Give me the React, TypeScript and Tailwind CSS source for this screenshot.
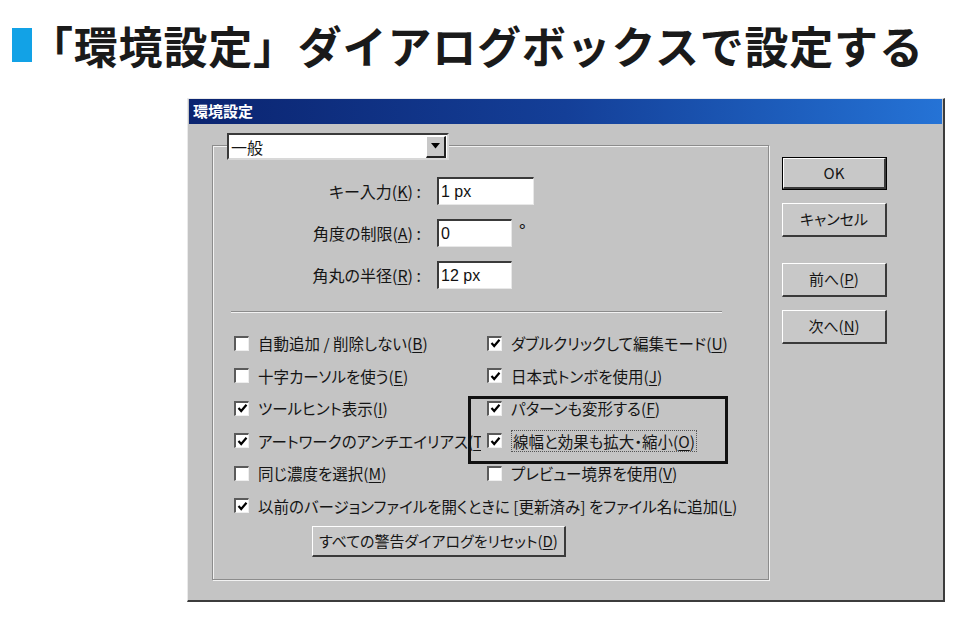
import React from 'react';

const jp = "font-['Noto_Sans_CJK_JP','Noto_Sans',sans-serif]";

function U({ children }: { children: React.ReactNode }) {
  return <span className="underline underline-offset-2">{children}</span>;
}

function CheckBox({ checked }: { checked: boolean }) {
  return (
    <span className="w-[15px] h-[15px] shrink-0 bg-white border-t-2 border-l-2 border-t-[#5a5a5a] border-l-[#5a5a5a] border-b border-r border-b-[#eeeeee] border-r-[#eeeeee] flex items-center justify-center">
      {checked && (
        <svg width="11" height="11" viewBox="0 0 11 11">
          <path d="M1.5 5 L4.2 8 L9.5 1.8" fill="none" stroke="#000" strokeWidth="2.2" />
        </svg>
      )}
    </span>
  );
}

function Check({ checked, children, focus }: { checked: boolean; children: React.ReactNode; focus?: boolean }) {
  return (
    <div className="h-[32.5px] flex items-center gap-[9px] whitespace-nowrap">
      <CheckBox checked={checked} />
      <span className={focus ? 'border border-dotted border-[#555] px-[1px] leading-[20px]' : 'leading-[20px]'}>
        {children}
      </span>
    </div>
  );
}

function Button({ children, className, isDefault }: { children: React.ReactNode; className: string; isDefault?: boolean }) {
  return (
    <div className={`${className} ${isDefault ? 'border border-black' : ''}`}>
      <div className="w-full h-full flex items-center justify-center bg-[#c8c8c8] border-t border-l border-t-white border-l-white border-b-2 border-r-2 border-b-[#3a3a3a] border-r-[#3a3a3a] text-[15px] text-[#151515] whitespace-nowrap">
        {children}
      </div>
    </div>
  );
}

function Field({ value, width }: { value: string; width: string }) {
  return (
    <div className={`${width} h-[28px] bg-white border-t-2 border-l-2 border-t-[#3a3a3a] border-l-[#3a3a3a] border-b border-r border-b-[#e8e8e8] border-r-[#e8e8e8] flex items-center pl-[2px] text-[16px] text-[#111] font-['Liberation_Sans',sans-serif]`}>
      {value}
    </div>
  );
}

export default function App() {
  return (
    <div className={`w-[975px] h-[629px] bg-white overflow-hidden ${jp}`}>
      {/* Heading */}
      <div className="h-[98px] flex items-center pl-[12px] pb-[8px]">
        <div className="w-[20px] h-[34px] bg-[#12a2e6]" />
        <h1 className="-ml-[3px] text-[44px] font-bold text-[#1a1a1a] leading-none tracking-[0.8px] whitespace-nowrap">
          「環境設定」ダイアログボックスで設定する
        </h1>
      </div>

      {/* Dialog window */}
      <div className="ml-[187px] w-[758px] h-[504px] flex flex-col bg-[#c4c4c4] border-t border-l border-t-[#eaeaea] border-l-[#eaeaea] border-b-2 border-r-2 border-b-[#3c3c3c] border-r-[#3c3c3c] text-[15.5px] text-[#151515] [font-feature-settings:'palt']">
        <div className="h-[25px] mx-[1px] bg-linear-to-r from-[#0b2470] via-[#143f98] to-[#2573d6] flex items-center pl-[4px] text-white text-[15px] font-bold">
          環境設定
        </div>

        <div className="flex pl-[24px] pt-[21px]">
          {/* Group box */}
          <div className="relative w-[557px] h-[435px] border border-[#8c8c8c] shadow-[inset_1px_1px_0_#f2f2f2,1px_1px_0_#f2f2f2]">
            {/* Panel selector */}
            <div className="absolute left-[14px] top-[-13px] w-[222px] h-[27px] bg-white border-t-2 border-l-2 border-t-[#3a3a3a] border-l-[#3a3a3a] border-b-2 border-r-2 border-b-[#d8d8d8] border-r-[#d8d8d8] flex items-center">
              <span className="flex-1 pl-[2px] text-[16px]">一般</span>
              <div className="w-[20px] h-[22px] mr-[1px] bg-[#c8c8c8] border-t border-l border-t-white border-l-white border-b-2 border-r-2 border-b-[#222] border-r-[#222] flex items-center justify-center">
                <svg width="9" height="6" viewBox="0 0 9 6">
                  <path d="M0 0 H9 L4.5 5.5 Z" fill="#000" />
                </svg>
              </div>
            </div>

            {/* Numeric fields */}
            <div className="grid grid-cols-[208px_auto] gap-x-[16px] gap-y-[14px] pt-[31px] items-center text-[16px]">
              <div className="text-right whitespace-nowrap">キー入力(<U>K</U>)&nbsp;:</div>
              <Field value="1 px" width="w-[97px]" />
              <div className="text-right whitespace-nowrap">角度の制限(<U>A</U>)&nbsp;:</div>
              <div className="flex items-start gap-[7px]">
                <Field value="0" width="w-[75px]" />
                <span className="text-[18px] leading-none mt-[2px]">°</span>
              </div>
              <div className="text-right whitespace-nowrap">角丸の半径(<U>R</U>)&nbsp;:</div>
              <Field value="12 px" width="w-[75px]" />
            </div>

            <div className="ml-[18px] mt-[22px] w-[491px] h-[2px] border-t border-t-[#8c8c8c] border-b border-b-[#f2f2f2]" />

            {/* Options */}
            <div className="grid grid-cols-[253px_auto] pl-[21px] mt-[14px]">
              <Check checked={false}>自動追加 / 削除しない(<U>B</U>)</Check>
              <Check checked>ダブルクリックして編集モード(<U>U</U>)</Check>
              <Check checked={false}>十字カーソルを使う(<U>E</U>)</Check>
              <Check checked>日本式トンボを使用(<U>J</U>)</Check>
              <Check checked>ツールヒント表示(<U>I</U>)</Check>
              <Check checked>パターンも変形する(<U>F</U>)</Check>
              <div className="w-[247px] overflow-hidden">
                <Check checked>アートワークのアンチエイリアス(<U>T</U>)</Check>
              </div>
              <Check checked focus>線幅と効果も拡大・縮小(<U>O</U>)</Check>
              <Check checked={false}>同じ濃度を選択(<U>M</U>)</Check>
              <Check checked={false}>プレビュー境界を使用(<U>V</U>)</Check>
              <div className="col-span-2">
                <Check checked>以前のバージョンファイルを開くときに [更新済み] をファイル名に追加(<U>L</U>)</Check>
              </div>
            </div>

            <div className="pl-[99px] mt-[4px]">
              <Button className="w-[254px] h-[31px]">すべての警告ダイアログをリセット(<U>D</U>)</Button>
            </div>

            {/* Annotation frame */}
            <div className="absolute left-[255px] top-[250px] w-[260px] h-[68px] border-[3px] border-[#111]" />
          </div>

          {/* Action buttons */}
          <div className="ml-[13px] pt-[12px] flex flex-col">
            <Button isDefault className="w-[105px] h-[33px]">OK</Button>
            <Button className="w-[105px] h-[34px] mt-[13px]">キャンセル</Button>
            <Button className="w-[105px] h-[34px] mt-[26px]">前へ(<U>P</U>)</Button>
            <Button className="w-[105px] h-[34px] mt-[13px]">次へ(<U>N</U>)</Button>
          </div>
        </div>
      </div>
    </div>
  );
}
